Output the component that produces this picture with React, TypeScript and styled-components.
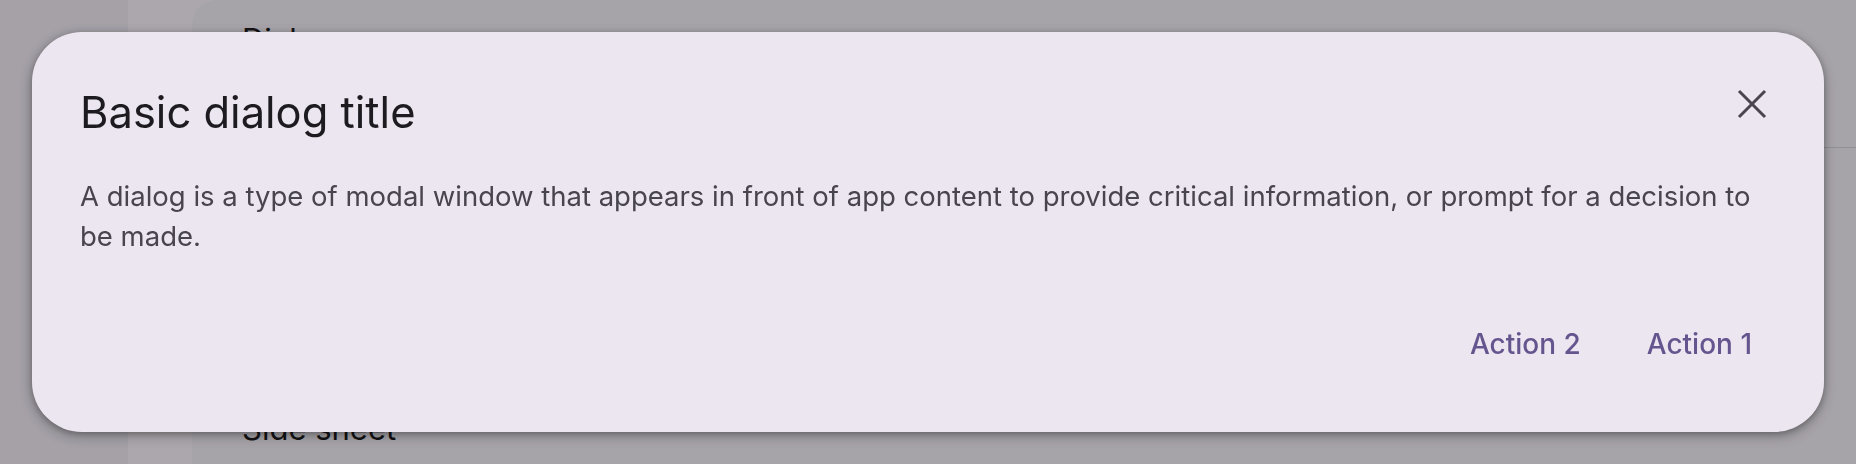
import React from 'react'
import styled, { createGlobalStyle } from 'styled-components'

const GlobalStyle = createGlobalStyle`
  html, body {
    margin: 0;
    padding: 0;
    width: 1856px;
    height: 464px;
    overflow: hidden;
    font-family: Inter, "Noto Sans", sans-serif;
    background: #fef7ff;
  }
`

const Page = styled.div`
  display: flex;
  flex-direction: row;
  width: 1856px;
  height: 464px;
`

const NavRail = styled.div`
  width: 128px;
  background: #f3edf7;
`

const SideColumn = styled.div`
  width: 64px;
  background: #fef7ff;
`

const Main = styled.main`
  flex: 1;
  display: flex;
  flex-direction: column;
  background: #f7f2fa;
  border-top-left-radius: 24px;
  padding: 22px 0 0 50px;
`

const SectionTitle = styled.h2`
  margin: 0;
  font-size: 31px;
  line-height: 36px;
  font-weight: 400;
  color: #1d1b20;
`

const DemoArea = styled.div`
  height: 89px;
`

const Divider = styled.hr`
  margin: 0;
  border: none;
  height: 1px;
  background: #d8d2dc;
`

const Spacer = styled.div`
  height: 263px;
`

const Scrim = styled.div`
  position: fixed;
  inset: 0;
  background: rgba(0, 0, 0, 0.32);
`

const DialogLayer = styled.div`
  position: fixed;
  inset: 0;
  padding: 32px;
  display: flex;
  align-items: flex-start;
`

const Dialog = styled.section`
  flex: 1;
  display: flex;
  flex-direction: column;
  padding: 48px;
  background: #ece6f0;
  border-radius: 50px;
  box-shadow: 0 4px 12px 4px rgba(0, 0, 0, 0.15), 0 2px 6px rgba(0, 0, 0, 0.3);
`

const Header = styled.div`
  display: flex;
  flex-direction: row;
  align-items: flex-start;
`

const Title = styled.h1`
  flex: 1;
  margin: 0;
  font-size: 43.5px;
  line-height: 64px;
  font-weight: 400;
  color: #1d1b20;
`

const CloseButton = styled.button`
  width: 80px;
  height: 80px;
  margin: -16px -16px 0 0;
  padding: 0;
  border: none;
  border-radius: 50%;
  background: transparent;
  color: #49454f;
  display: flex;
  align-items: center;
  justify-content: center;
  cursor: pointer;
`

const Body = styled.p`
  margin: 32px 0 0 0;
  font-size: 27.5px;
  line-height: 40px;
  font-weight: 400;
  color: #49454f;
`

const Actions = styled.div`
  display: flex;
  flex-direction: row;
  justify-content: flex-end;
  gap: 18px;
  margin-top: 48px;
`

const TextButton = styled.button`
  height: 80px;
  padding: 0 24px;
  border: none;
  border-radius: 40px;
  background: transparent;
  font-family: Inter, "Noto Sans", sans-serif;
  font-size: 28px;
  font-weight: 500;
  color: #65558f;
  cursor: pointer;
`

const CloseIcon = () => (
  <svg width="48" height="48" viewBox="0 0 48 48" fill="none">
    <line x1="11" y1="11" x2="37" y2="37" stroke="currentColor" strokeWidth="3" />
    <line x1="37" y1="11" x2="11" y2="37" stroke="currentColor" strokeWidth="3" />
  </svg>
)

export default function App() {
  return (
    <>
      <GlobalStyle />
      <Page>
        <NavRail />
        <SideColumn />
        <Main>
          <SectionTitle>Dialog</SectionTitle>
          <DemoArea />
          <Divider />
          <Spacer />
          <SectionTitle>Side sheet</SectionTitle>
        </Main>
      </Page>
      <Scrim />
      <DialogLayer>
        <Dialog role="dialog" aria-modal="true">
          <Header>
            <Title>Basic dialog title</Title>
            <CloseButton aria-label="Close">
              <CloseIcon />
            </CloseButton>
          </Header>
          <Body>
            A dialog is a type of modal window that appears in front of app content to provide critical
            information, or prompt for a decision to be made.
          </Body>
          <Actions>
            <TextButton>Action 2</TextButton>
            <TextButton>Action 1</TextButton>
          </Actions>
        </Dialog>
      </DialogLayer>
    </>
  )
}
